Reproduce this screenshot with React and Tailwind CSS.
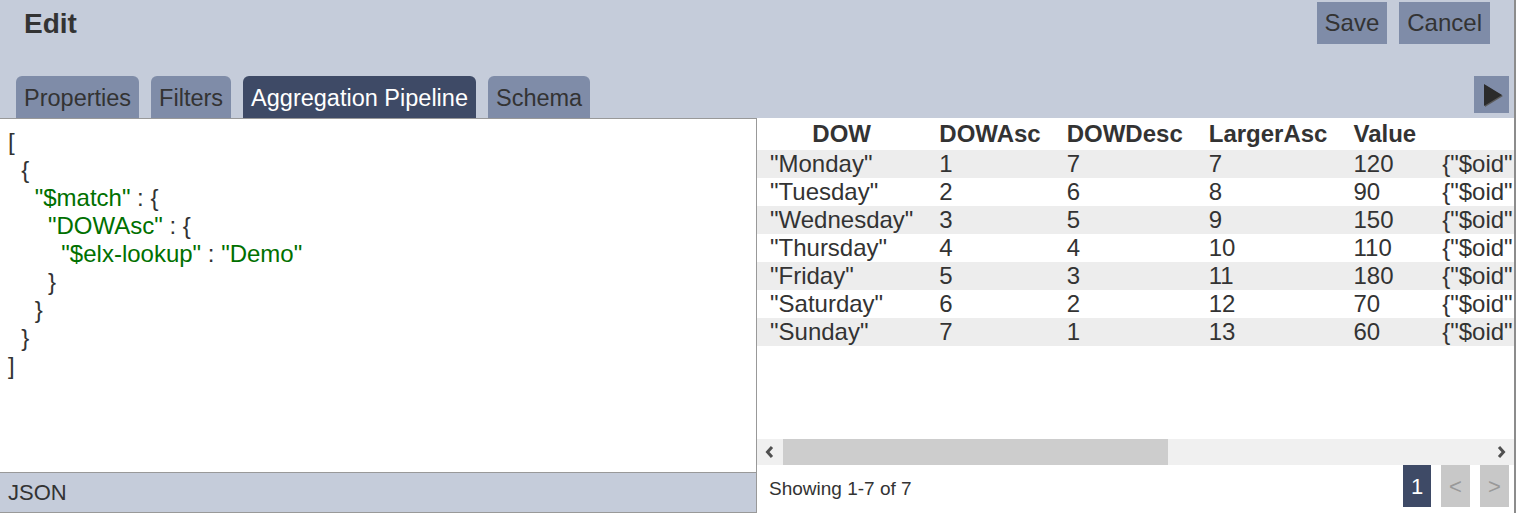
import React from 'react';

const rows = [
  ['"Monday"', 1, 7, 7, 120, '5f3c9a1e8b2d4c0017a1b201'],
  ['"Tuesday"', 2, 6, 8, 90, '5f3c9a1e8b2d4c0017a1b202'],
  ['"Wednesday"', 3, 5, 9, 150, '5f3c9a1e8b2d4c0017a1b203'],
  ['"Thursday"', 4, 4, 10, 110, '5f3c9a1e8b2d4c0017a1b204'],
  ['"Friday"', 5, 3, 11, 180, '5f3c9a1e8b2d4c0017a1b205'],
  ['"Saturday"', 6, 2, 12, 70, '5f3c9a1e8b2d4c0017a1b206'],
  ['"Sunday"', 7, 1, 13, 60, '5f3c9a1e8b2d4c0017a1b207'],
];

const tabs = ['Properties', 'Filters', 'Aggregation Pipeline', 'Schema'];

export default function App() {
  const str = 'text-[#007000]';
  return (
    <div className="w-[1516px] h-[513px] border-r-2 border-[#8c8c8c] flex flex-col font-['Liberation_Sans',Arial,sans-serif] text-[#333]">
      {/* header */}
      <div className="h-[118px] bg-[#c5ccda] flex flex-col shrink-0">
        <div className="h-[76px] flex justify-between items-start">
          <h1 className="ml-6 mt-[8px] text-[28px] leading-[32px] font-bold">Edit</h1>
          <div className="flex gap-3 mr-6 mt-[2px]">
            <button className="h-[42px] px-2 bg-[#7f8ca8] text-[24px] text-[#333]">Save</button>
            <button className="h-[42px] px-2 bg-[#7f8ca8] text-[24px] text-[#333]">Cancel</button>
          </div>
        </div>
        <div className="h-[42px] flex items-start justify-between pl-4 pr-[5px]">
          <div className="flex gap-3 h-[42px]">
            {tabs.map(t => (
              <div
                key={t}
                className={
                  t === 'Aggregation Pipeline'
                    ? 'h-[42px] px-2 rounded-t-md bg-[#3e4a66] text-white text-[23.5px] leading-[44px]'
                    : 'h-[42px] px-2 rounded-t-md bg-[#7f8ca8] text-[#333] text-[23.5px] leading-[44px]'
                }
              >
                {t}
              </div>
            ))}
          </div>
          <button className="w-[35px] h-[37px] bg-[#7f8ca8] flex items-center justify-center">
            <svg width="24" height="26" viewBox="0 0 24 26">
              <polygon points="4,2 22,13 4,24" fill="#5a5a5a" transform="translate(1,1)" />
              <polygon points="4,2 22,13 4,24" fill="#2b2b2b" />
            </svg>
          </button>
        </div>
      </div>

      {/* body */}
      <div className="flex flex-1 min-h-0">
        {/* JSON editor */}
        <div className="w-[757px] shrink-0 border-t border-r border-[#999] flex flex-col">
          <pre className="flex-1 pt-[9px] px-2 text-[24px] leading-[28px] font-['Liberation_Sans',Arial,sans-serif] text-[#333]">
{'[\n  {\n    '}<span className={str}>"$match"</span>{' : {\n      '}<span className={str}>"DOWAsc"</span>{' : {\n        '}<span className={str}>"$elx-lookup"</span>{' : '}<span className={str}>"Demo"</span>{'\n      }\n    }\n  }\n]'}
          </pre>
          <div className="h-[41px] bg-[#c5ccda] border-t border-b border-[#999] px-2 text-[22px] leading-[39px]">JSON</div>
        </div>

        {/* results */}
        <div className="flex-1 min-w-0 flex flex-col">
          <div className="flex-1 overflow-hidden">
            <table className="min-w-full border-collapse text-[24px] whitespace-nowrap">
              <thead>
                <tr className="h-[32px]">
                  {['DOW', 'DOWAsc', 'DOWDesc', 'LargerAsc', 'Value', '_id'].map(h => (
                    <th key={h} className="px-[13px] font-bold text-center leading-[32px]">{h}</th>
                  ))}
                </tr>
              </thead>
              <tbody>
                {rows.map((r, i) => (
                  <tr key={i} className={i % 2 === 0 ? 'h-[28px] bg-[#ededed]' : 'h-[28px] bg-white'}>
                    {r.slice(0, 5).map((c, j) => (
                      <td key={j} className="px-[13px] text-left leading-[28px]">{c}</td>
                    ))}
                    <td className="px-[13px] text-left leading-[28px]">{'{"$oid":"' + r[5] + '"}'}</td>
                  </tr>
                ))}
              </tbody>
            </table>
          </div>

          {/* scrollbar */}
          <div className="h-[26px] bg-[#f0f0f0] flex items-center shrink-0">
            <div className="w-[26px] h-full flex items-center justify-center">
              <svg width="10" height="12" viewBox="0 0 10 12">
                <polyline points="7,1 2.5,6 7,11" fill="none" stroke="#505050" strokeWidth="3" />
              </svg>
            </div>
            <div className="w-[385px] h-full bg-[#cdcdcd]" />
            <div className="flex-1" />
            <div className="w-[26px] h-full flex items-center justify-center">
              <svg width="10" height="12" viewBox="0 0 10 12">
                <polyline points="3,1 7.5,6 3,11" fill="none" stroke="#505050" strokeWidth="3" />
              </svg>
            </div>
          </div>

          {/* footer */}
          <div className="h-[48px] flex justify-between items-start pl-3 pr-[5px] shrink-0">
            <span className="text-[19px] leading-[48px] text-[#333]">Showing 1-7 of 7</span>
            <div className="flex gap-[10px]">
              <button className="w-[28px] h-[42px] bg-[#3e4a66] text-white text-[22px]">1</button>
              <button className="w-[29px] h-[42px] bg-[#c8c8c8] text-[#999] text-[22px]">&lt;</button>
              <button className="w-[29px] h-[42px] bg-[#c8c8c8] text-[#999] text-[22px]">&gt;</button>
            </div>
          </div>
        </div>
      </div>
    </div>
  );
}
